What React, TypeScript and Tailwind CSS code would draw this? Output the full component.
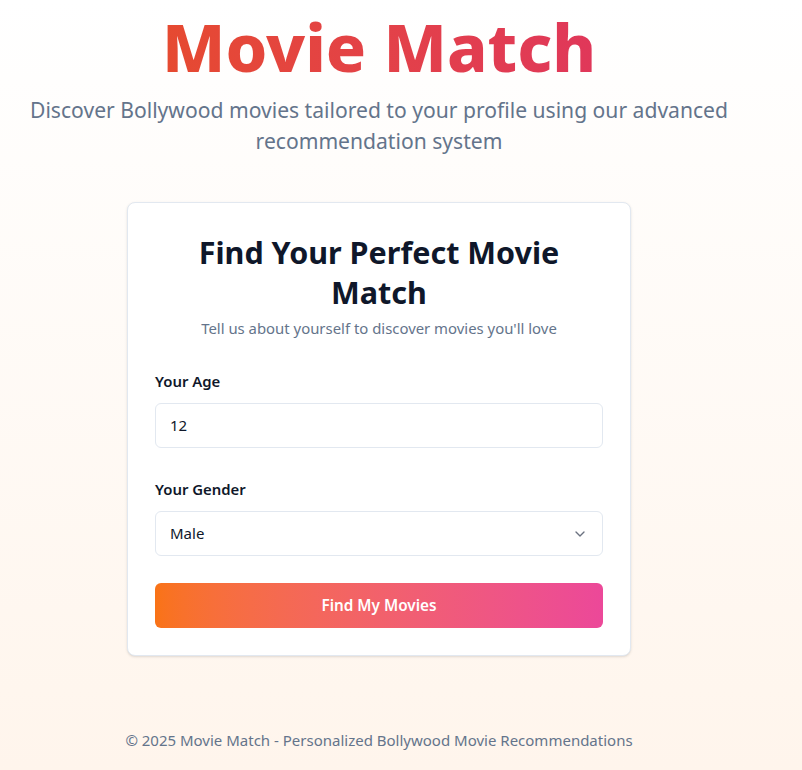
import React from "react";

export default function App() {
  return (
    <div
      className="min-h-[770px] w-full bg-gradient-to-b from-white to-[#fff5ec]"
      style={{ fontFamily: '"Noto Sans", "Open Sans", sans-serif' }}
    >
      <div className="w-[758px] flex flex-col items-center">
        <h1 className="pt-[6px] pb-[4px] px-[4px] text-[66.5px] leading-[80px] font-extrabold bg-gradient-to-r from-[#e64a2f] to-[#e0375a] bg-clip-text text-transparent">
          Movie Match
        </h1>
        <p className="mt-[4px] w-[740px] text-center text-[21.1px] leading-[31px] text-[#64748b]">
          Discover Bollywood movies tailored to your profile using our advanced recommendation system
        </p>

        <div className="mt-[46px] w-[504px] rounded-lg border border-[#e2e8f0] bg-white px-[27px] pt-[29px] pb-[27px] shadow-sm">
          <h2 className="text-center text-[30.5px] leading-[40px] font-bold text-[#0f172a] px-[40px]">
            Find Your Perfect Movie Match
          </h2>
          <p className="mt-[5px] text-center text-[14.9px] leading-[22px] text-[#64748b]">
            Tell us about yourself to discover movies you'll love
          </p>

          <div className="mt-[32px]">
            <label className="block text-[14.9px] leading-[20px] font-semibold text-[#0f172a]">Your Age</label>
            <div className="mt-[12px] h-[45px] w-full rounded-md border border-[#e2e8f0] bg-white px-[14px] flex items-center text-[15px] text-[#0f172a]">
              12
            </div>
          </div>

          <div className="mt-[31px]">
            <label className="block text-[14.9px] leading-[20px] font-semibold text-[#0f172a]">Your Gender</label>
            <div className="mt-[12px] h-[45px] w-full rounded-md border border-[#e2e8f0] bg-white px-[14px] flex items-center justify-between text-[15px] text-[#0f172a]">
              <span>Male</span>
              <svg width="16" height="16" viewBox="0 0 24 24" fill="none" stroke="#6b7280" strokeWidth="2" strokeLinecap="round" strokeLinejoin="round">
                <path d="m6 9 6 6 6-6" />
              </svg>
            </div>
          </div>

          <button className="mt-[27px] h-[45px] w-full rounded-md bg-gradient-to-r from-[#f97316] to-[#ec4899] text-[15.3px] font-semibold text-white">
            Find My Movies
          </button>
        </div>

        <p className="mt-[74px] text-[15px] leading-[20px] text-[#64748b]">
          © 2025 Movie Match - Personalized Bollywood Movie Recommendations
        </p>
      </div>
    </div>
  );
}
